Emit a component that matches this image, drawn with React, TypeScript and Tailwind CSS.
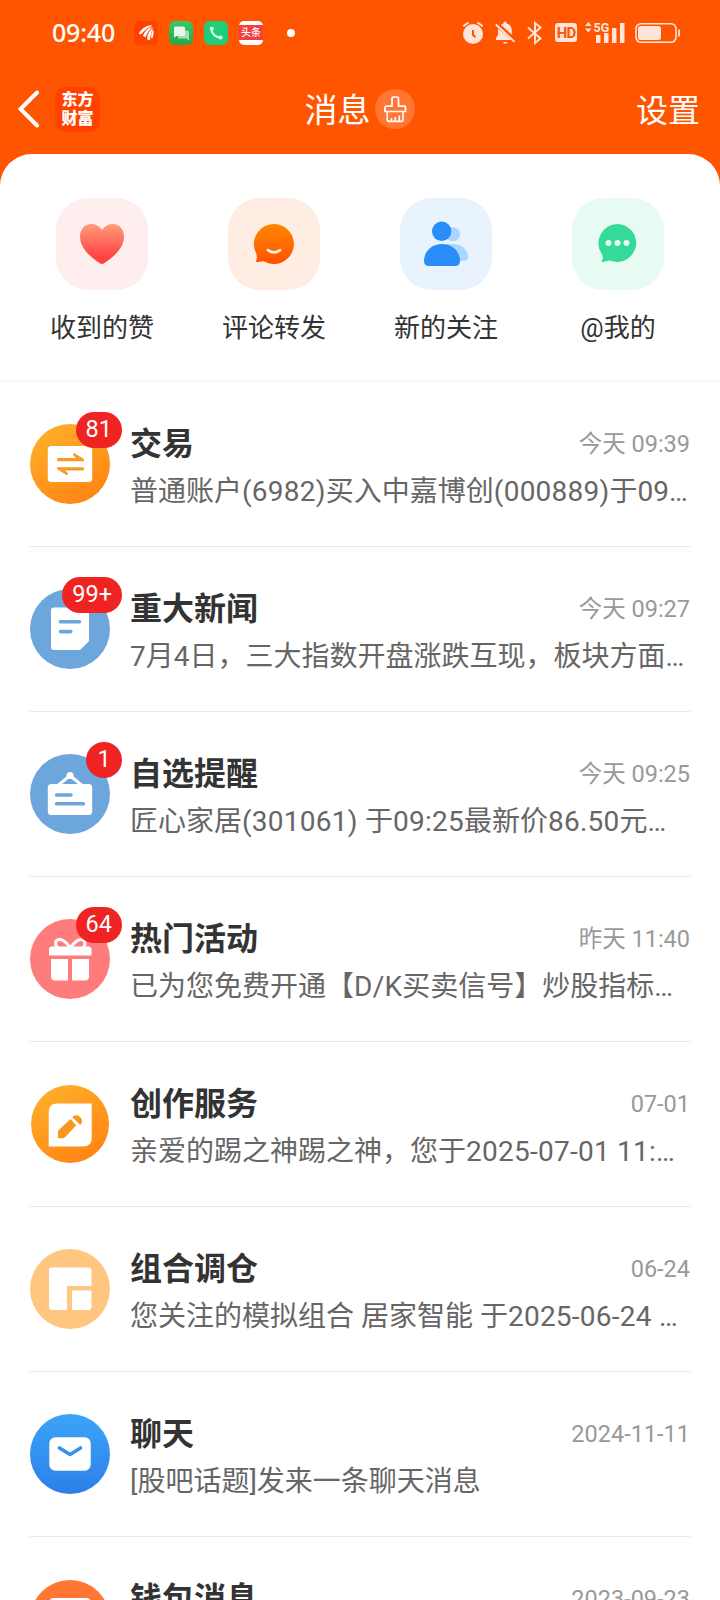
import type { ReactNode } from "react";

type Message = {
  title: string;
  text: string;
  time: string;
  badge?: string;
  icon: ReactNode;
};

function StatusBar() {
  return (
    <div className="flex h-16 items-center pt-px pr-[40px] pl-[52px]">
      <span className="w-[82px] pb-0.5 font-['Noto_Sans'] text-[25px] leading-8 font-medium tracking-[-0.2px]">
        09:40
      </span>
      <div className="flex items-center gap-[11px]">
        <svg className="size-6" viewBox="0 0 24 24" fill="none">
          <rect width="24" height="24" rx="5" fill="#ff4200" />
          <path d="M4.800 12.200C8 7 13 3.800 18.500 4.200 15 6 10 9.500 7.500 13Q5.500 13.500 4.800 12.200Z" fill="#fff" />
          <path d="M9 14.800C10.500 10.500 14 7 18.500 5.200 15.500 9 13 12 11.800 15.800Q10 16.300 9 14.800Z" fill="#fff" />
          <path d="M13 18C13.500 13 15.800 9 19 6.500 17.500 10.500 16.500 14 16 19Q14 19.500 13 18Z" fill="#fff" />
          <path d="M17.300 17C17 13 17.800 10 19.300 8.500 20 12 19.300 15 18.300 17.500Z" fill="#fff" />
        </svg>
        <svg className="size-6" viewBox="0 0 24 24" fill="none">
          <defs>
            <linearGradient id="sms" x1="0" y1="0" x2="0" y2="1">
              <stop stopColor="#3bc768" />
              <stop offset="1" stopColor="#27a549" />
            </linearGradient>
          </defs>
          <rect width="24" height="24" rx="6" fill="url(#sms)" />
          <path d="M9 9.500h9.500a1.500 1.500 0 0 1 1.500 1.500v8.500l-2.500-2H9Z" fill="#a6dfb5" />
          <path d="M6.300 5.500h8.200A1.500 1.500 0 0 1 16 7v6.500a1.500 1.500 0 0 1-1.500 1.500H7.500L5 16.800V7a1.500 1.500 0 0 1 1.300-1.500Z" fill="#e6f8ea" />
        </svg>
        <svg className="size-6" viewBox="0 0 24 24" fill="none">
          <rect width="24" height="24" rx="6" fill="#1fcf78" />
          <path d="M7.300 8C8 12.500 11.500 15.900 16 16.700" stroke="#e5fff1" strokeWidth="1.800" />
          <circle cx="7.800" cy="7.800" r="2" fill="#e5fff1" />
          <circle cx="16.500" cy="16.500" r="2" fill="#e5fff1" />
        </svg>
        <div className="flex size-6 items-center justify-center overflow-hidden rounded-[5px] bg-white">
          <span className="flex h-[15px] w-6 items-center justify-center bg-[#f2403c] text-[10px] leading-none font-medium">
            头条
          </span>
        </div>
      </div>
      <span className="ml-6 size-2 rounded-full bg-white" />
      <div className="ml-auto flex items-center text-[#ffe5d9]">
        <svg className="mr-[11px] h-6 w-[22px]" viewBox="0 0 22 24" fill="none" stroke="currentColor">
          <circle cx="11" cy="13" r="10" fill="currentColor" stroke="none" />
          <path d="M1.200 5.200 6.500 1.500M20.800 5.200 15.500 1.500" strokeWidth="2" />
          <path d="M11 9v5l2.500 2.200" stroke="#ff5500" strokeWidth="2" />
        </svg>
        <svg className="mr-3 h-6 w-5" viewBox="0 0 20 24" fill="currentColor">
          <path d="M10 0.500a2 2 0 0 1 1.700 2C15 3.500 16.800 6 16.800 9.500v4.500l2.200 3v2H1v-2l2-3V9.500C3 6 5 3.500 8.300 2.500A2 2 0 0 1 10 .5Z" />
          <path d="M8 21h4.500a2.300 2.300 0 0 1-4.500 0Z" />
          <path d="m1.500 3 19 17" stroke="#ff5500" strokeWidth="4.500" />
          <path d="m.8 3.600 18.700 17.200" stroke="currentColor" strokeWidth="2" />
        </svg>
        <svg className="mr-3 h-6 w-4" viewBox="0 0 16 24" fill="none" stroke="currentColor" strokeWidth="2">
          <path d="m1 6.500 12.500 11L8 22V2l5.500 4.500L1 17.500" />
        </svg>
        <span className="mr-2 flex h-[19px] w-[22px] items-center justify-center rounded-[3px] bg-[#ffe5d9] pt-px font-[Roboto] text-[15px] leading-none font-bold tracking-[-0.8px] text-[#ff5500]">
          HD
        </span>
        <svg className="mr-[10px] h-6 w-10" viewBox="0 0 40 24" fill="currentColor">
          <path d="m0 5 3.300-4 3.300 4ZM0 7.500h6.600l-3.300 4Z" />
          <path d="M11 14h4.500v8H11ZM19 12h4.500v10H19ZM27 7h4.500v15H27ZM35 2h4.500v20H35Z" />
          <text x="8.500" y="10.500" fontFamily="Roboto" fontSize="12.500" fontWeight="700">
            5G
          </text>
        </svg>
        <svg className="h-6 w-[45px]" viewBox="0 0 45 24" fill="none">
          <rect x="1" y="2.700" width="40" height="18.600" rx="5" stroke="currentColor" strokeWidth="1.600" />
          <rect x="3" y="5" width="23" height="14" rx="2.500" fill="currentColor" />
          <path d="M44 8.500v7" stroke="currentColor" strokeWidth="1.800" />
        </svg>
      </div>
    </div>
  );
}

function NavBar() {
  return (
    <div className="grid h-[90px] grid-cols-3 items-center pr-5 pl-[18px]">
      <div className="flex items-center gap-[15px]">
        <svg className="h-[38px] w-[22px]" viewBox="0 0 22 38" fill="none" stroke="#fff" strokeWidth="4">
          <path d="M19 2.500 2.500 19 19 35.500" strokeLinecap="round" />
        </svg>
        <div className="flex size-[45px] items-center justify-center rounded-[10px] bg-[#ff4200] text-center text-[16px] leading-[19px] font-black">
          东方
          <br />
          财富
        </div>
      </div>
      <div className="flex items-center justify-center gap-[5px] pl-[2px]">
        <h1 className="pt-1 text-[33px] leading-10">消息</h1>
        <svg className="size-10" viewBox="0 0 40 40" fill="none" stroke="#fff" strokeWidth="1.700" strokeLinejoin="round">
          <circle cx="20" cy="20" r="20" fill="#ff7733" stroke="none" />
          <path d="M17 17.200V9.500a1.500 1.500 0 0 1 1.500-1.500h3.500a1.500 1.500 0 0 1 1.500 1.500v7.700h5.500a1.500 1.500 0 0 1 1.500 1.500V22.500H10v-3.800a1.500 1.500 0 0 1 1.500-1.500Z" />
          <path d="M12.200 22.500v8.300a1.500 1.500 0 0 0 1.500 1.500h12.800a1.500 1.500 0 0 0 1.500-1.500v-8.300M16.500 32v-3M20.300 32v-4M24.300 32v-5.500" />
        </svg>
      </div>
      <span className="pt-1 text-right text-[32px] leading-10">设置</span>
    </div>
  );
}

const shortcuts = [
  {
    label: "收到的赞",
    tile: "bg-[#ffeeee]",
    icon: (
      <>
        <defs>
          <linearGradient id="heart" x1="0" y1="0" x2="0" y2="1">
            <stop stopColor="#ff9c7c" />
            <stop offset=".85" stopColor="#ff4141" />
          </linearGradient>
        </defs>
        <path
          d="M46 32C43 27.800 39.500 26 35.500 26 28.500 26 24 31.500 24 38.500 24 50 34 58.500 43.500 65Q46 66.800 48.500 65C58 58.500 68 50 68 38.500 68 31.500 63.500 26 56.500 26 52.500 26 49 27.800 46 32Z"
          fill="url(#heart)"
        />
      </>
    ),
  },
  {
    label: "评论转发",
    tile: "bg-[#ffede4]",
    icon: (
      <>
        <defs>
          <linearGradient id="comment" x1="0" y1="0" x2="0" y2="1">
            <stop stopColor="#ff8800" />
            <stop offset="1" stopColor="#ff5100" />
          </linearGradient>
        </defs>
        <path
          d="M46 26a20 20 0 1 1-9.800 37.500C34 62.500 31.500 64.200 28.800 64Q27.800 63.800 28.200 62.800C29 60.500 29 58.500 28.300 55.500A20 20 0 0 1 46 26Z"
          fill="url(#comment)"
        />
        <path d="M40 52.200Q46 56.600 52 52.200" fill="none" stroke="#ffeee2" strokeWidth="2.800" strokeLinecap="round" />
      </>
    ),
  },
  {
    label: "新的关注",
    tile: "bg-[#e8f3fe]",
    icon: (
      <>
        <circle cx="53" cy="36.300" r="7" fill="#a9d6ff" />
        <path d="M46 46h8c8 0 14 6.500 14 13 0 2.500-1.500 3.800-4 3.800H46Z" fill="#a9d6ff" />
        <circle cx="41.700" cy="33.300" r="9.700" fill="#288cf9" />
        <path d="M42 46C31 46 24 54 24 63q0 5 5 5h26q5 0 5-5C60 54 53 46 42 46Z" fill="#288cf9" />
      </>
    ),
  },
  {
    label: "@我的",
    tile: "bg-[#e8fbf2]",
    icon: (
      <>
        <path
          d="M45.500 26a19 19 0 1 1-7.500 36.600C35 62.500 33 64.200 30 64Q29 63.600 30 62.600C31.300 61 31 58.500 29.800 56A19.300 19.300 0 0 1 45.500 26Z"
          fill="#35da99"
        />
        <circle cx="36.500" cy="45" r="3" fill="#e8fbf2" />
        <circle cx="45.500" cy="45" r="3" fill="#e8fbf2" />
        <circle cx="54.500" cy="45" r="3" fill="#e8fbf2" />
      </>
    ),
  },
];

const messages: Message[] = [
  {
    title: "交易",
    text: "普通账户(6982)买入中嘉博创(000889)于09…",
    time: "今天 09:39",
    badge: "81",
    icon: (
      <>
        <circle cx="40" cy="40" r="40" fill="url(#amber)" />
        <rect x="17.800" y="22" width="44.400" height="36" rx="3.500" fill="#fff" />
        <path
          d="M28.500 34H46l-2.500-2.500a1.200 1.200 0 0 1 1.500-2l9 5.500V37.200H28.500a1.600 1.600 0 0 1 0-3.200ZM52.500 46.500H35l2.500 2.200a1.200 1.200 0 0 1-1.500 2L27 45V43.200h25.500a1.600 1.600 0 0 1 0 3.300Z"
          fill="#f49b2b"
        />
      </>
    ),
  },
  {
    title: "重大新闻",
    text: "7月4日，三大指数开盘涨跌互现，板块方面…",
    time: "今天 09:27",
    badge: "99+",
    icon: (
      <>
        <circle cx="40" cy="40" r="40" fill="#6ca6dc" />
        <path d="M24 18.500h32a3 3 0 0 1 3 3V52l-9 9H24a3 3 0 0 1-3-3V21.500a3 3 0 0 1 3-3Z" fill="#fff" />
        <path d="M30.500 32.700h19M30.500 42.600h10.300" stroke="#6ca6dc" strokeWidth="3.600" strokeLinecap="round" />
      </>
    ),
  },
  {
    title: "自选提醒",
    text: "匠心家居(301061) 于09:25最新价86.50元…",
    time: "今天 09:25",
    badge: "1",
    icon: (
      <>
        <circle cx="40" cy="40" r="40" fill="#6ca6dc" />
        <rect x="17.800" y="30" width="44.400" height="31" rx="3.500" fill="#fff" />
        <path d="M28.500 31 40 21.500 51.500 31" fill="none" stroke="#fff" strokeWidth="3" />
        <circle cx="40" cy="21.500" r="3.500" fill="#fff" />
        <path d="M26.500 41h14.500M26.500 49.700h27" stroke="#6ca6dc" strokeWidth="3.400" strokeLinecap="round" />
      </>
    ),
  },
  {
    title: "热门活动",
    text: "已为您免费开通【D/K买卖信号】炒股指标…",
    time: "昨天 11:40",
    badge: "64",
    icon: (
      <>
        <circle cx="40" cy="40" r="40" fill="#ff7c7c" />
        <path d="M22 27.500h36.500a3 3 0 0 1 3 3v6H19v-6a3 3 0 0 1 3-3Z" fill="#fff" />
        <path d="M21 40h17v21.500H25a4 4 0 0 1-4-4ZM42 40h17v17.500a4 4 0 0 1-4 4H42Z" fill="#fff" />
        <path
          d="M40.300 29C37 24 32 19.500 28 20.800 24.500 22 25 27 28 28.500M40.300 29C43.500 24 48.500 19.500 52.500 20.800 56 22 55.500 27 52.500 28.500"
          fill="none"
          stroke="#fff"
          strokeWidth="3"
        />
      </>
    ),
  },
  {
    title: "创作服务",
    text: "亲爱的踢之神踢之神，您于2025-07-01 11:…",
    time: "07-01",
    icon: (
      <>
        <circle cx="40" cy="40" r="39" fill="url(#amber)" />
        <path d="M27 19.500h34.700V54q0 8.500-8.500 8.500H18.700V28q0-8.500 8.300-8.500Z" fill="#fff" />
        <path d="m40.500 35 5.800 6.300L35 53.300q-1 .9-2.400.9H28v-6.400q0-1 .8-1.800Z" fill="#f99721" />
        <path d="m42.300 33.300 1.400-1.300c3-2.600 9.500 1.500 8.300 6.300q-.3 1.200-1.700 2.600Z" fill="#f99721" />
      </>
    ),
  },
  {
    title: "组合调仓",
    text: "您关注的模拟组合 居家智能 于2025-06-24 …",
    time: "06-24",
    icon: (
      <>
        <circle cx="40" cy="40" r="40" fill="#ffc681" />
        <path d="M22 18.500h36.500a3 3 0 0 1 3 3V37H37v24H22a3 3 0 0 1-3-3V21.500a3 3 0 0 1 3-3Z" fill="#fff" />
        <path d="M42 41.500h19.500V58a3 3 0 0 1-3 3H42Z" fill="#fff" />
      </>
    ),
  },
  {
    title: "聊天",
    text: "[股吧话题]发来一条聊天消息",
    time: "2024-11-11",
    icon: (
      <>
        <circle cx="40" cy="40" r="40" fill="url(#sky)" />
        <rect x="19.300" y="23.300" width="41.400" height="33.400" rx="6" fill="#fff" />
        <path d="m29.500 34 10.500 6.500L50.500 34" fill="none" stroke="#3892ed" strokeWidth="3.600" strokeLinecap="round" strokeLinejoin="round" />
      </>
    ),
  },
  {
    title: "钱包消息",
    text: "",
    time: "2023-09-23",
    icon: (
      <>
        <circle cx="40" cy="41" r="40" fill="#ff7733" />
        <rect x="19.500" y="19" width="41" height="40" rx="4" fill="#fff" />
      </>
    ),
  },
];

// Latin runs are set slightly looser than the Chinese around them
function MixedText({ text }: { text: string }) {
  return text.split(/([\x20-\x7e]{3,})/).map((part, i) => (
    <span key={i} className={i % 2 ? "tracking-[0.25px]" : ""}>
      {part}
    </span>
  ));
}

function MessageRow({ title, text, time, badge, icon }: Message) {
  return (
    <li className="flex h-[165px] shrink-0 gap-5 border-b border-[#e8e8e8] pt-[42px]">
      <div className="relative size-20 shrink-0">
        <svg className="size-20" viewBox="0 0 80 80">
          <defs>
            <linearGradient id="amber" x1=".2" y1="0" x2=".8" y2="1">
              <stop stopColor="#ffb02a" />
              <stop offset="1" stopColor="#ff8213" />
            </linearGradient>
            <linearGradient id="sky" x1="0" y1="0" x2="0" y2="1">
              <stop stopColor="#3ba5f7" />
              <stop offset="1" stopColor="#2d7ee9" />
            </linearGradient>
          </defs>
          {icon}
        </svg>
        {badge && (
          <span className="absolute -top-3 -right-3 flex h-9 min-w-9 items-center justify-center rounded-full bg-[#f02323] px-[10px] text-[23.5px] leading-none text-white">
            {badge}
          </span>
        )}
      </div>
      <div className="min-w-0 flex-1">
        <div className="flex items-center justify-between">
          <h2 className="text-[32px] leading-[40px] font-bold text-[#333]">{title}</h2>
          <time className="text-[23.5px] leading-[40px] text-[#999]">{time}</time>
        </div>
        <p className="mt-1.5 text-[28px] leading-[44px] whitespace-nowrap text-[#666]">
          <MixedText text={text} />
        </p>
      </div>
    </li>
  );
}

export default function App() {
  return (
    <div
      lang="zh-CN"
      className="flex h-[1600px] w-[720px] flex-col overflow-hidden bg-[#ff5500] font-[Roboto,'Noto_Sans_CJK_SC',sans-serif] text-white"
    >
      <StatusBar />
      <NavBar />
      <main className="flex min-h-0 flex-1 flex-col overflow-hidden rounded-t-[32px] bg-white">
        <nav className="grid h-[228px] shrink-0 grid-cols-4 border-b-2 border-[#f7f7f7] px-4 pt-11">
          {shortcuts.map((item) => (
            <a key={item.label} className="flex flex-col items-center gap-[18px]">
              <div className={`size-[92px] rounded-[32px] ${item.tile}`}>
                <svg className="size-[92px]" viewBox="0 0 92 92">
                  {item.icon}
                </svg>
              </div>
              <span className="text-[26px] leading-[40px] text-[#333]">{item.label}</span>
            </a>
          ))}
        </nav>
        <ul className="flex flex-col px-[30px]">
          {messages.map((message) => (
            <MessageRow key={message.title} {...message} />
          ))}
        </ul>
      </main>
    </div>
  );
}
